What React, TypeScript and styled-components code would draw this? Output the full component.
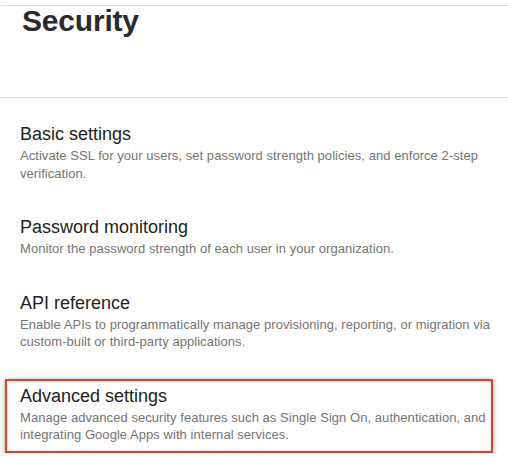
import styled, { createGlobalStyle } from 'styled-components';

const GlobalStyle = createGlobalStyle`
  html, body {
    margin: 0;
    padding: 0;
    background: #fff;
    font-family: "Liberation Sans", Arial, Helvetica, sans-serif;
  }
`;

const items = [
  {
    title: 'Basic settings',
    text: 'Activate SSL for your users, set password strength policies, and enforce 2-step verification.',
  },
  {
    title: 'Password monitoring',
    text: 'Monitor the password strength of each user in your organization.',
  },
  {
    title: 'API reference',
    text: 'Enable APIs to programmatically manage provisioning, reporting, or migration via custom-built or third-party applications.',
  },
  {
    title: 'Advanced settings',
    text: 'Manage advanced security features such as Single Sign On, authentication, and integrating Google Apps with internal services.',
    highlighted: true,
  },
];

const App = () => {
  return (
    <>
      <GlobalStyle />
      <Page>
        <Header>
          <Title>Security</Title>
        </Header>
        <List>
          {items.map((item) => (
            <Item key={item.title} $highlighted={item.highlighted}>
              <ItemTitle>{item.title}</ItemTitle>
              <ItemText>{item.text}</ItemText>
            </Item>
          ))}
        </List>
      </Page>
    </>
  );
};

const Page = styled.div`
  width: 508px;
  padding-top: 5px;
`;

const Header = styled.div`
  border-top: 1px solid #dedede;
  border-bottom: 1px solid #dedede;
  margin-left: 1px;
  padding: 0 22px 61px 21px;
`;

const Title = styled.h1`
  margin: 0;
  font-size: 30px;
  line-height: 30px;
  font-weight: bold;
  color: #2b2b2b;
  letter-spacing: -0.2px;
`;

const List = styled.div`
  display: flex;
  flex-direction: column;
  gap: 34px;
  padding: 25px 0 0 20px;
`;

const Item = styled.div<{ $highlighted?: boolean }>`
  display: flex;
  flex-direction: column;
  gap: 2px;
  ${(p) =>
    p.$highlighted &&
    `
    margin: -6px 15px 0 -15px;
    padding: 4px 0 7px 13px;
    border: 2px solid #d8432b;
    box-shadow: 0 1px 5px rgba(0, 0, 0, 0.4), inset 0 0 3px rgba(0, 0, 0, 0.2);
  `}
`;

const ItemTitle = styled.h2`
  margin: 0;
  font-size: 18px;
  line-height: 22px;
  font-weight: normal;
  color: #222;
`;

const ItemText = styled.p`
  margin: 0;
  max-width: 472px;
  font-size: 13px;
  line-height: 17.5px;
  color: #747474;
  letter-spacing: 0.05px;
`;

export default App;
